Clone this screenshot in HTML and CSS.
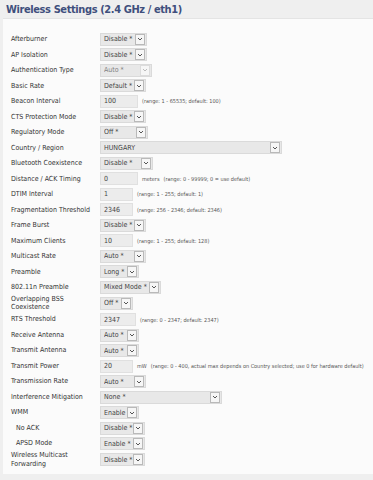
FILE: index.html
```html
<!DOCTYPE html>
<html lang="en">
<head>
  <meta charset="UTF-8" />
  <title>Wireless Settings</title>
  <link rel="stylesheet" href="styles.css">
</head>
<body>
  <div class="section-title">Wireless Settings (2.4 GHz / eth1)</div>
  <div class="section">
    <table class="fields">
      <tr><td class="label">Afterburner</td><td><span class="sel w47"><select><option>Disable *</option></select><i class="arr"><svg viewBox="0 0 6 4"><path d="M1 1l2 2 2-2"/></svg></i></span></td></tr>
      <tr><td class="label">AP Isolation</td><td><span class="sel w47"><select><option>Disable *</option></select><i class="arr"><svg viewBox="0 0 6 4"><path d="M1 1l2 2 2-2"/></svg></i></span></td></tr>
      <tr><td class="label">Authentication Type</td><td><span class="sel w52 off"><select disabled><option>Auto *</option></select><i class="arr"><svg viewBox="0 0 6 4"><path d="M1 1l2 2 2-2"/></svg></i></span></td></tr>
      <tr><td class="label">Basic Rate</td><td><span class="sel w46"><select><option>Default *</option></select><i class="arr"><svg viewBox="0 0 6 4"><path d="M1 1l2 2 2-2"/></svg></i></span></td></tr>
      <tr><td class="label">Beacon Interval</td><td><input class="txt w38" value="100"><span class="hint">(range: 1 - 65535; default: 100)</span></td></tr>
      <tr><td class="label">CTS Protection Mode</td><td><span class="sel w46"><select><option>Disable *</option></select><i class="arr"><svg viewBox="0 0 6 4"><path d="M1 1l2 2 2-2"/></svg></i></span></td></tr>
      <tr><td class="label">Regulatory Mode</td><td><span class="sel w48"><select><option>Off *</option></select><i class="arr"><svg viewBox="0 0 6 4"><path d="M1 1l2 2 2-2"/></svg></i></span></td></tr>
      <tr><td class="label">Country / Region</td><td><span class="sel w182"><select><option>HUNGARY</option></select><i class="arr"><svg viewBox="0 0 6 4"><path d="M1 1l2 2 2-2"/></svg></i></span></td></tr>
      <tr><td class="label">Bluetooth Coexistence</td><td><span class="sel w53"><select><option>Disable *</option></select><i class="arr"><svg viewBox="0 0 6 4"><path d="M1 1l2 2 2-2"/></svg></i></span></td></tr>
      <tr><td class="label">Distance / ACK Timing</td><td><input class="txt w38" value="0"><span class="hint">meters</span><span class="hint">(range: 0 - 99999; 0 = use default)</span></td></tr>
      <tr><td class="label">DTIM Interval</td><td><input class="txt w33" value="1"><span class="hint">(range: 1 - 255; default: 1)</span></td></tr>
      <tr><td class="label">Fragmentation Threshold</td><td><input class="txt w33" value="2346"><span class="hint">(range: 256 - 2346; default: 2346)</span></td></tr>
      <tr><td class="label">Frame Burst</td><td><span class="sel w46"><select><option>Disable *</option></select><i class="arr"><svg viewBox="0 0 6 4"><path d="M1 1l2 2 2-2"/></svg></i></span></td></tr>
      <tr><td class="label">Maximum Clients</td><td><input class="txt w33" value="10"><span class="hint">(range: 1 - 255; default: 128)</span></td></tr>
      <tr><td class="label">Multicast Rate</td><td><span class="sel w46"><select><option>Auto *</option></select><i class="arr"><svg viewBox="0 0 6 4"><path d="M1 1l2 2 2-2"/></svg></i></span></td></tr>
      <tr><td class="label">Preamble</td><td><span class="sel w39"><select><option>Long *</option></select><i class="arr"><svg viewBox="0 0 6 4"><path d="M1 1l2 2 2-2"/></svg></i></span></td></tr>
      <tr><td class="label">802.11n Preamble</td><td><span class="sel w61"><select><option>Mixed Mode *</option></select><i class="arr"><svg viewBox="0 0 6 4"><path d="M1 1l2 2 2-2"/></svg></i></span></td></tr>
      <tr class="tall"><td class="label">Overlapping BSS<br>Coexistence</td><td><span class="sel w33"><select><option>Off *</option></select><i class="arr"><svg viewBox="0 0 6 4"><path d="M1 1l2 2 2-2"/></svg></i></span></td></tr>
      <tr><td class="label">RTS Threshold</td><td><input class="txt w36" value="2347"><span class="hint">(range: 0 - 2347; default: 2347)</span></td></tr>
      <tr><td class="label">Receive Antenna</td><td><span class="sel w39"><select><option>Auto *</option></select><i class="arr"><svg viewBox="0 0 6 4"><path d="M1 1l2 2 2-2"/></svg></i></span></td></tr>
      <tr><td class="label">Transmit Antenna</td><td><span class="sel w39"><select><option>Auto *</option></select><i class="arr"><svg viewBox="0 0 6 4"><path d="M1 1l2 2 2-2"/></svg></i></span></td></tr>
      <tr><td class="label">Transmit Power</td><td><input class="txt w33" value="20"><span class="hint">mW</span><span class="hint">(range: 0 - 400, actual max depends on Country selected; use 0 for hardware default)</span></td></tr>
      <tr><td class="label">Transmission Rate</td><td><span class="sel w46"><select><option>Auto *</option></select><i class="arr"><svg viewBox="0 0 6 4"><path d="M1 1l2 2 2-2"/></svg></i></span></td></tr>
      <tr><td class="label">Interference Mitigation</td><td><span class="sel w122"><select><option>None *</option></select><i class="arr"><svg viewBox="0 0 6 4"><path d="M1 1l2 2 2-2"/></svg></i></span></td></tr>
      <tr><td class="label">WMM</td><td><span class="sel w39"><select><option>Enable</option></select><i class="arr"><svg viewBox="0 0 6 4"><path d="M1 1l2 2 2-2"/></svg></i></span></td></tr>
      <tr><td class="label sub">No ACK</td><td><span class="sel w45"><select><option>Disable *</option></select><i class="arr"><svg viewBox="0 0 6 4"><path d="M1 1l2 2 2-2"/></svg></i></span></td></tr>
      <tr><td class="label sub">APSD Mode</td><td><span class="sel w45"><select><option>Enable *</option></select><i class="arr"><svg viewBox="0 0 6 4"><path d="M1 1l2 2 2-2"/></svg></i></span></td></tr>
      <tr class="tall"><td class="label">Wireless Multicast<br>Forwarding</td><td><span class="sel w45"><select><option>Disable *</option></select><i class="arr"><svg viewBox="0 0 6 4"><path d="M1 1l2 2 2-2"/></svg></i></span></td></tr>
    </table>
  </div>
</body>
</html>
```

FILE: styles.css
```css
body {
  margin: 0;
  background: #efefef;
  font-family: "DejaVu Sans", sans-serif;
  font-stretch: condensed;
  color: #333;
}

.section-title {
  height: 18px;
  padding-left: 6px;
  font-size: 11px;
  font-weight: bold;
  letter-spacing: -0.4px;
  line-height: 20px;
  color: #3f4f7d;
}

.section {
  margin-left: 3px;
  padding: 12.5px 0 6px 8px;
  background: #fbfbfb;
  border-top: 1px solid #e4e4e4;
}

.fields {
  border-collapse: collapse;
}

.fields td {
  padding: 0;
  height: 15.5px;
  white-space: nowrap;
  vertical-align: middle;
  font-size: 7px;
}

.fields td.label {
  width: 89px;
  line-height: 8.4px;
  color: #333;
}

.fields td.sub {
  padding-left: 5px;
  width: 84px;
}

.fields tr.tall td {
  height: 16.8px;
}

.sel {
  display: inline-flex;
  height: 13px;
  box-sizing: border-box;
  border: 1px solid #dadada;
  background: #e8e8e8;
  vertical-align: middle;
}

.sel select {
  flex: 1;
  min-width: 0;
  appearance: none;
  border: none;
  background: transparent;
  padding: 0 0 0 3px;
  margin: 0;
  font: inherit;
  font-size: 7px;
  color: #444;
}

.sel .arr {
  width: 8px;
  margin: 0 1px 0 0;
  border: 1px solid #b9b9b9;
  background: #f6f6f6;
  display: flex;
  align-items: center;
  justify-content: center;
}

.sel .arr svg {
  width: 6px;
  height: 4px;
  fill: none;
  stroke: #555;
  stroke-width: 1;
}

.sel.off select {
  color: #555;
}

.sel.off .arr {
  border-color: #dcdcdc;
}

.sel.off .arr svg {
  stroke: #bbb;
}

.txt {
  height: 13px;
  box-sizing: border-box;
  border: 1px solid #e0e0e0;
  background: #ececec;
  padding: 0 0 0 3px;
  margin: 0;
  font: inherit;
  font-size: 7px;
  color: #444;
  vertical-align: middle;
}

.hint {
  margin-left: 4px;
  font-size: 5.5px;
  color: #555;
  vertical-align: middle;
}

.w33 { width: 33px; }
.w36 { width: 36px; }
.w38 { width: 38px; }
.w39 { width: 39px; }
.w45 { width: 45px; }
.w46 { width: 46px; }
.w47 { width: 47px; }
.w48 { width: 48px; }
.w52 { width: 52px; }
.w53 { width: 53px; }
.w61 { width: 61px; }
.w122 { width: 122px; }
.w182 { width: 182px; }
```
